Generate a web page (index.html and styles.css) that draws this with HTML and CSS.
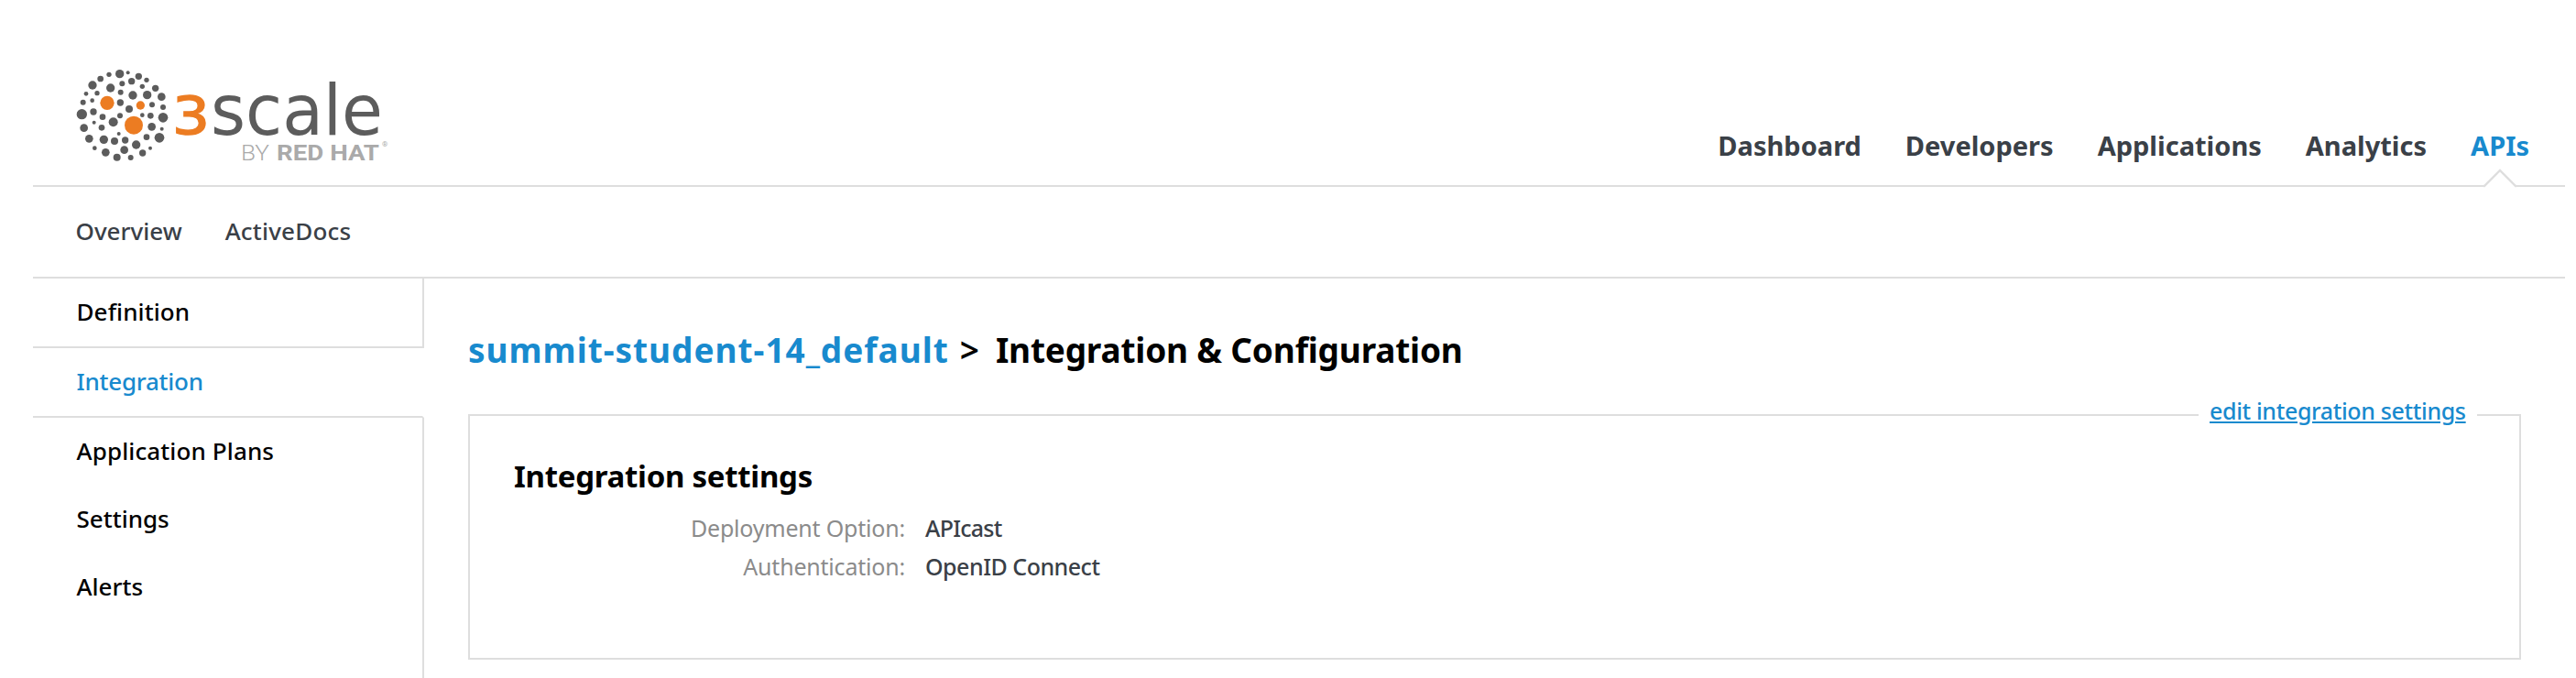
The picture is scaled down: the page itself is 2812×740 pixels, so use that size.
FILE: index.html
```html
<!DOCTYPE html>
<html lang="en">
<head>
<meta charset="utf-8">
<title>Integration &amp; Configuration</title>
<link rel="stylesheet" href="styles.css">
</head>
<body>
<div class="page">
  <header class="header">
    <a class="logo">
      <svg width="360" height="120" viewBox="0 0 360 120">
        <g transform="scale(0.33333)" fill="#5c5c5c">
          <circle cx="182" cy="47" r="14"/><circle cx="209" cy="43" r="6"/><circle cx="147" cy="49" r="8"/><circle cx="119" cy="63" r="10"/><circle cx="244" cy="55" r="11"/><circle cx="270" cy="67" r="8"/><circle cx="93" cy="84" r="14"/><circle cx="221" cy="71" r="11"/><circle cx="190" cy="79" r="9"/><circle cx="152" cy="93" r="14"/><circle cx="256" cy="88" r="8"/><circle cx="299" cy="94" r="11"/><circle cx="72" cy="112" r="7"/><circle cx="108" cy="110" r="8"/><circle cx="185" cy="107" r="9"/><circle cx="225" cy="117" r="14"/><circle cx="272" cy="116" r="14"/><circle cx="319" cy="122" r="13"/><circle cx="62" cy="140" r="9"/><circle cx="92" cy="134" r="7"/><circle cx="184" cy="141" r="11"/><circle cx="288" cy="148" r="9"/><circle cx="324" cy="156" r="9"/><circle cx="213" cy="162" r="12"/><circle cx="58" cy="179" r="17"/><circle cx="96" cy="171" r="11"/><circle cx="126" cy="188" r="10"/><circle cx="183" cy="184" r="9"/><circle cx="256" cy="182" r="7"/><circle cx="283" cy="184" r="10"/><circle cx="324" cy="190" r="16"/><circle cx="98" cy="206" r="6"/><circle cx="161" cy="205" r="15"/><circle cx="65" cy="224" r="13"/><circle cx="123" cy="223" r="10"/><circle cx="287" cy="220" r="13"/><circle cx="320" cy="227" r="6"/><circle cx="179" cy="243" r="6"/><circle cx="82" cy="259" r="13"/><circle cx="130" cy="262" r="14"/><circle cx="165" cy="267" r="12"/><circle cx="200" cy="264" r="11"/><circle cx="270" cy="254" r="10"/><circle cx="312" cy="256" r="16"/><circle cx="236" cy="279" r="14"/><circle cx="100" cy="290" r="7"/><circle cx="136" cy="304" r="13"/><circle cx="197" cy="296" r="13"/><circle cx="257" cy="306" r="11"/><circle cx="282" cy="290" r="6"/><circle cx="173" cy="320" r="12"/><circle cx="218" cy="321" r="9"/>
          <g fill="#ec7c22"><circle cx="141" cy="142" r="23"/><circle cx="250" cy="150" r="14"/><circle cx="228" cy="215" r="30"/></g>
        </g>
        <text class="logo-three" x="118" y="81.5" textLength="41" lengthAdjust="spacingAndGlyphs">3</text>
        <text class="logo-scale" x="160" y="81.5" textLength="188" lengthAdjust="spacingAndGlyphs">scale</text>
        <text class="logo-by" x="193" y="110" textLength="31" lengthAdjust="spacingAndGlyphs">BY</text>
        <text class="logo-redhat" x="232" y="110" textLength="112" lengthAdjust="spacingAndGlyphs">RED HAT</text>
        <text class="logo-reg" x="347" y="95">®</text>
      </svg>
    </a>
    <nav class="nav">
      <a>Dashboard</a>
      <a>Developers</a>
      <a>Applications</a>
      <a>Analytics</a>
      <a class="active">APIs<svg class="notch" width="36" height="22" viewBox="0 0 36 22"><rect x="1" y="18" width="34" height="4" fill="#fff"/><path d="M0 19H1L18 2L35 19H36" fill="none" stroke="#dedede" stroke-width="2.4"/></svg></a>
    </nav>
  </header>
  <nav class="subnav"><a>Overview</a><a class="docs">ActiveDocs</a></nav>
  <div class="columns">
    <aside class="sidebar">
      <a class="item first">Definition</a>
      <a class="item current">Integration</a>
      <a class="item plans">Application Plans</a>
      <a class="item">Settings</a>
      <a class="item rest">Alerts</a>
    </aside>
    <main class="main">
      <h1 class="title"><a class="service">summit-student-14_default</a><span class="sep">&gt;</span><span class="crumb">Integration &amp; Configuration</span></h1>
      <section class="panel">
        <div class="legend"><a class="edit">edit integration settings</a></div>
        <h2 class="subtitle">Integration settings</h2>
        <dl class="facts">
          <dt>Deployment Option:</dt><dd class="option">APIcast</dd>
          <dt>Authentication:</dt><dd>OpenID Connect</dd>
        </dl>
      </section>
    </main>
  </div>
</div>
</body>
</html>
```
FILE: styles.css
```css
* { box-sizing: border-box; }
body { margin: 0; background: #fff; font-family: "Noto Sans", sans-serif; color: #3a4047; }
.page { height: 740px; padding: 0 12px 0 36px; display: flex; flex-direction: column; overflow: hidden; }
.header { flex: none; height: 204px; padding: 65px 39px 0 34px; border-bottom: 2px solid #dedede; display: flex; justify-content: space-between; align-items: flex-start; }
.logo svg { display: block; }
.logo-three { font: 57px "DejaVu Sans", sans-serif; fill: #ec7c22; stroke: #ec7c22; stroke-width: 1.5; }
.logo-scale { font: 76px "DejaVu Sans", sans-serif; fill: #5c5c5c; }
.logo-by { font: 300 24.5px Roboto, sans-serif; fill: #aaa; }
.logo-redhat { font: bold 24.5px Roboto, sans-serif; fill: #aaa; }
.logo-reg { font: 8px Roboto, sans-serif; fill: #aaa; }
.nav { display: flex; gap: 48px; padding-top: 74px; font-size: 29px; font-weight: 700; line-height: 40px; }
.nav a { position: relative; }
.active { color: #188ace; }
.notch { position: absolute; left: 14px; top: 45px; }
.subnav { flex: none; height: 100px; padding-left: 46.5px; border-bottom: 2px solid #dedede; display: flex; gap: 47px; font-size: 26px; line-height: 96px; font-weight: 500; }
.docs { letter-spacing: 0.2px; }
.columns { flex: 1; display: flex; }
.sidebar { width: 427px; display: flex; flex-direction: column; color: #000; font-size: 26px; font-weight: 500; line-height: 72px; }
.item { padding: 0 0 2px 47.5px; border-right: 2px solid #dedede; }
.item.first, .item.current { border-bottom: 2px solid #dedede; }
.item.first { letter-spacing: 0.1px; }
.item.plans { letter-spacing: 0.12px; }
.item.current { border-right-color: transparent; color: #188ace; letter-spacing: -0.25px; }
.item.rest { flex: 1; }
.main { flex: 1; padding: 48px 48px 0; }
.title { margin: 0 0 40px; display: flex; font-size: 37px; line-height: 60px; font-weight: 700; color: #000; }
.service { color: #188ace; letter-spacing: 0.97px; }
.sep { margin: 0 18px 0 12px; font-weight: 600; }
.crumb { letter-spacing: -0.2px; }
.panel { position: relative; height: 268px; padding: 46px 0 0 49px; border: 2px solid #dedede; }
.legend { position: absolute; right: 46px; top: -21px; width: 304px; height: 30px; padding-left: 12px; background: #fff; line-height: 30px; font-size: 25px; font-weight: 500; letter-spacing: -0.35px; white-space: nowrap; }
.edit { color: #188ace; text-decoration: underline; }
.subtitle { margin: 0 0 0 -1px; font-size: 33px; line-height: 40px; font-weight: 700; letter-spacing: -0.28px; color: #000; }
.facts { margin: 15px 0 0; display: grid; grid-template-columns: 426px 1fr; column-gap: 22px; font-size: 25px; line-height: 42px; font-weight: 500; letter-spacing: -0.5px; }
.facts dt { text-align: right; color: #8b8b8b; font-weight: 400; letter-spacing: -0.2px; }
.facts dd { margin: 0; }
.facts .option { letter-spacing: -0.75px; }
```
